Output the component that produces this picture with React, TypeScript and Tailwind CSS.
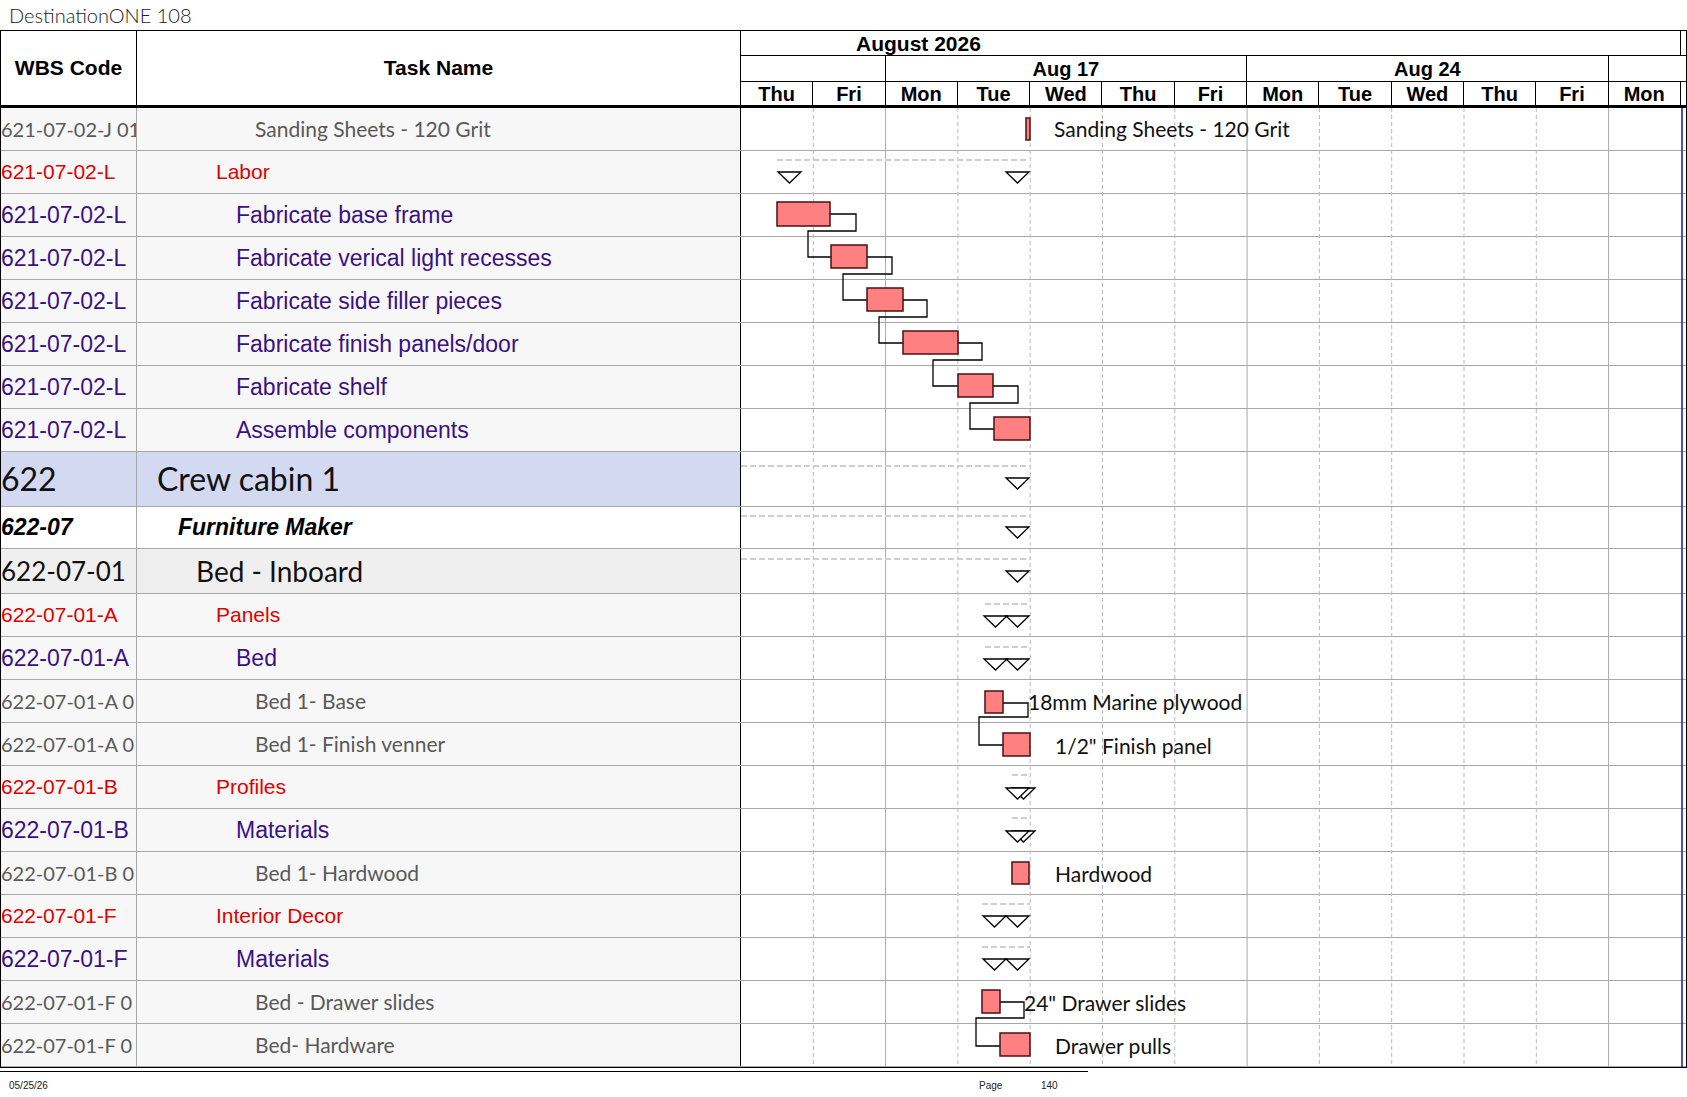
import React from "react";

type RowType = "gray" | "red" | "purple" | "crew" | "furn" | "bedin";

const rows: { t: RowType; code: string; name: string }[] = [
  { t: "gray", code: "621-07-02-J 01", name: "Sanding Sheets - 120 Grit" },
  { t: "red", code: "621-07-02-L", name: "Labor" },
  { t: "purple", code: "621-07-02-L", name: "Fabricate base frame" },
  { t: "purple", code: "621-07-02-L", name: "Fabricate verical light recesses" },
  { t: "purple", code: "621-07-02-L", name: "Fabricate side filler pieces" },
  { t: "purple", code: "621-07-02-L", name: "Fabricate finish panels/door" },
  { t: "purple", code: "621-07-02-L", name: "Fabricate shelf" },
  { t: "purple", code: "621-07-02-L", name: "Assemble components" },
  { t: "crew", code: "622", name: "Crew cabin 1" },
  { t: "furn", code: "622-07", name: "Furniture Maker" },
  { t: "bedin", code: "622-07-01", name: "Bed - Inboard" },
  { t: "red", code: "622-07-01-A", name: "Panels" },
  { t: "purple", code: "622-07-01-A", name: "Bed" },
  { t: "gray", code: "622-07-01-A 0", name: "Bed 1- Base" },
  { t: "gray", code: "622-07-01-A 0", name: "Bed 1- Finish venner" },
  { t: "red", code: "622-07-01-B", name: "Profiles" },
  { t: "purple", code: "622-07-01-B", name: "Materials" },
  { t: "gray", code: "622-07-01-B 0", name: "Bed 1- Hardwood" },
  { t: "red", code: "622-07-01-F", name: "Interior Decor" },
  { t: "purple", code: "622-07-01-F", name: "Materials" },
  { t: "gray", code: "622-07-01-F 0", name: "Bed - Drawer slides" },
  { t: "gray", code: "622-07-01-F 0", name: "Bed- Hardware" },
];

const styles: Record<RowType, { row: string; bg: string; code: string; text: string; indent: string }> = {
  gray: {
    row: "h-[43px]",
    bg: "bg-[#f7f7f7]",
    code: "font-['Lato',sans-serif] text-[20px] text-[#595959]",
    text: "font-['Lato',sans-serif] text-[21px] text-[#595959]",
    indent: "pl-[118px]",
  },
  red: {
    row: "h-[43px]",
    bg: "bg-[#f7f7f7]",
    code: "font-['Liberation_Sans',Arial,sans-serif] text-[21px] text-[#e00000]",
    text: "font-['Liberation_Sans',Arial,sans-serif] text-[21px] text-[#e00000]",
    indent: "pl-[79px]",
  },
  purple: {
    row: "h-[43px]",
    bg: "bg-[#f7f7f7]",
    code: "font-['Liberation_Sans',Arial,sans-serif] text-[23px] text-[#3a1185]",
    text: "font-['Liberation_Sans',Arial,sans-serif] text-[23px] text-[#3a1185]",
    indent: "pl-[99px]",
  },
  crew: {
    row: "h-[55px]",
    bg: "bg-[#d3d9f0]",
    code: "font-['Lato',sans-serif] text-[32px] text-[#111111]",
    text: "font-['Lato',sans-serif] text-[32px] text-[#111111]",
    indent: "pl-[20px]",
  },
  furn: {
    row: "h-[42px]",
    bg: "bg-white",
    code: "font-['Liberation_Sans',Arial,sans-serif] text-[23px] font-bold italic text-black",
    text: "font-['Liberation_Sans',Arial,sans-serif] text-[23px] font-bold italic text-black",
    indent: "pl-[41px]",
  },
  bedin: {
    row: "h-[45px]",
    bg: "bg-[#efefef]",
    code: "font-['Lato',sans-serif] text-[26px] text-[#111111]",
    text: "font-['Lato',sans-serif] text-[28px] text-[#111111]",
    indent: "pl-[59px]",
  },
};

const days = ["Thu", "Fri", "Mon", "Tue", "Wed", "Thu", "Fri", "Mon", "Tue", "Wed", "Thu", "Fri", "Mon"];

const OX = 740;
const OY = 108;
const DW = 72.3;

function X(x: number) {
  return x - OX;
}
function Y(y: number) {
  return y - OY;
}

const bars: [number, number, number, number][] = [
  [1025, 1029, 118, 140],
  [776, 829, 202, 226],
  [830, 866, 245, 268],
  [866, 902, 288, 311],
  [902, 957, 331, 354],
  [957, 992, 374, 397],
  [993, 1029, 417, 440],
  [984, 1002, 691, 713],
  [1002, 1029, 733, 756],
  [1011, 1028, 862, 884],
  [981, 999, 990, 1013],
  [999, 1029, 1033, 1056],
];

const connectors: [number, number][][] = [
  [[829, 214], [855, 214], [855, 231], [807, 231], [807, 257], [830, 257]],
  [[866, 257], [891, 257], [891, 274], [842, 274], [842, 300], [866, 300]],
  [[902, 300], [926, 300], [926, 317], [878, 317], [878, 343], [902, 343]],
  [[957, 343], [981, 343], [981, 360], [932, 360], [932, 386], [957, 386]],
  [[992, 386], [1017, 386], [1017, 403], [969, 403], [969, 429], [993, 429]],
  [[1002, 703], [1027, 703], [1027, 717], [978, 717], [978, 745], [1002, 745]],
  [[999, 1002], [1023, 1002], [1023, 1018], [975, 1018], [975, 1046], [999, 1046]],
];

const dashes: [number, number, number][] = [
  [776, 1027, 160],
  [740, 1029, 466],
  [740, 1029, 516],
  [740, 1029, 559],
  [984, 1029, 604],
  [984, 1029, 647],
  [1011, 1029, 775],
  [1011, 1029, 818],
  [981, 1029, 904],
  [981, 1029, 947],
];

const tris: [number, number][] = [
  [777, 172],
  [1005, 172],
  [1005, 478],
  [1005, 527],
  [1005, 571],
  [983, 616],
  [1005, 616],
  [983, 659],
  [1005, 659],
  [1011, 788],
  [1005, 788],
  [1011, 831],
  [1005, 831],
  [982, 916],
  [1005, 916],
  [982, 959],
  [1005, 959],
];

const labels: [number, number, string][] = [
  [1053, 128.5, "Sanding Sheets - 120 Grit"],
  [1027, 701.5, "18mm Marine plywood"],
  [1054, 745, '1/2" Finish panel'],
  [1054, 873.5, "Hardwood"],
  [1023, 1002.5, '24" Drawer slides'],
  [1054, 1045.5, "Drawer pulls"],
];

function Chart() {
  const vlines = [];
  for (let k = 1; k <= 12; k++) {
    const x = k * DW;
    const solid = k === 2 || k === 7 || k === 12;
    vlines.push(
      <line
        key={k}
        x1={x}
        x2={x}
        y1={0}
        y2={960}
        stroke={solid ? "#a8a8a8" : "#b8b8b8"}
        strokeWidth={1}
        strokeDasharray={solid ? undefined : "4 3"}
      />
    );
  }
  return (
    <svg
      className="absolute left-[740px] top-0 pointer-events-none"
      width={947}
      height={959}
      viewBox="0 0 947 959"
    >
      {vlines}
      <line x1={941} x2={941} y1={0} y2={959} stroke="#1a1aa8" strokeWidth={1.5} />
      {dashes.map(([x1, x2, y], i) => (
        <line
          key={"d" + i}
          x1={X(x1)}
          x2={X(x2)}
          y1={Y(y)}
          y2={Y(y)}
          stroke="#cfcfcf"
          strokeWidth={2}
          strokeDasharray="6 3"
        />
      ))}
      {tris.map(([x, t], i) => (
        <polygon
          key={"t" + i}
          points={`${X(x)},${Y(t)} ${X(x + 23)},${Y(t)} ${X(x + 11.5)},${Y(t + 11)}`}
          fill="white"
          stroke="#000"
          strokeWidth={1.3}
          strokeLinejoin="miter"
        />
      ))}
      {connectors.map((pts, i) => (
        <polyline
          key={"c" + i}
          points={pts.map(([x, y]) => `${X(x)},${Y(y)}`).join(" ")}
          fill="none"
          stroke="#000"
          strokeWidth={1.3}
        />
      ))}
      {bars.map(([x1, x2, y1, y2], i) => (
        <rect
          key={"b" + i}
          x={X(x1)}
          y={Y(y1)}
          width={x2 - x1}
          height={y2 - y1}
          fill="#ff8080"
          stroke="#4a1010"
          strokeWidth={1.5}
        />
      ))}
      {labels.map(([x, y, s], i) => (
        <text
          key={"l" + i}
          x={X(x)}
          y={Y(y)}
          dominantBaseline="central"
          fontFamily="Lato, sans-serif"
          fontSize={21}
          fill="#111"
        >
          {s}
        </text>
      ))}
    </svg>
  );
}

export default function App() {
  return (
    <div className="w-[1687px] h-[1097px] bg-white overflow-hidden relative">
      <div className="h-[30px] flex items-center pl-[9px] font-['Lato',sans-serif] font-light text-[20px] text-[#222]">
        DestinationONE 108
      </div>

      {/* Header */}
      <div className="flex h-[78px] border-t border-b-[3px] border-l border-r border-black">
        <div className="w-[136px] border-r border-black flex items-center justify-center font-['Liberation_Sans',Arial,sans-serif] font-bold text-[21px]">
          WBS Code
        </div>
        <div className="w-[604px] border-r border-black flex items-center justify-center font-['Liberation_Sans',Arial,sans-serif] font-bold text-[21px]">
          Task Name
        </div>
        <div className="flex-1 flex flex-col font-['Liberation_Sans',Arial,sans-serif] font-bold text-[20px] leading-none">
          <div className="h-[25px] flex border-b border-black">
            <div className="w-[940px] border-r border-black flex items-center pl-[115px] text-[21px]">August 2026</div>
            <div className="flex-1"></div>
          </div>
          <div className="h-[26px] flex border-b border-black">
            <div className="w-[144.6px] border-r border-black"></div>
            <div className="w-[361.5px] border-r border-black flex items-center justify-center">Aug 17</div>
            <div className="w-[361.5px] border-r border-black flex items-center justify-center">Aug 24</div>
            <div className="flex-1"></div>
          </div>
          <div className="flex-1 flex">
            {days.map((d, i) => (
              <div key={i} className="w-[72.3px] border-r border-black flex items-center justify-center">
                {d}
              </div>
            ))}
            <div className="flex-1"></div>
          </div>
        </div>
      </div>

      {/* Body */}
      <div className="relative border-l border-r border-b border-black">
        {rows.map((r, i) => {
          const s = styles[r.t];
          return (
            <div key={i} className={`flex border-b border-[#a8a8a8] ${s.row}`}>
              <div
                className={`w-[136px] border-r border-[#a8a8a8] flex items-center overflow-hidden whitespace-nowrap ${s.bg} ${s.code}`}
              >
                {r.code}
              </div>
              <div
                className={`w-[604px] border-r border-black flex items-center overflow-hidden whitespace-nowrap ${s.bg} ${s.text} ${s.indent}`}
              >
                {r.name}
              </div>
              <div className="flex-1 bg-white"></div>
            </div>
          );
        })}
        <Chart />
      </div>

      {/* Footer */}
      <div className="w-[1088px] border-t border-black mt-[3px]"></div>
      <div className="relative h-[20px] font-['Liberation_Sans',Arial,sans-serif] text-[10px] text-[#222]">
        <span className="absolute left-[9px] top-[6px]">05/25/26</span>
        <span className="absolute left-[979px] top-[6px]">Page</span>
        <span className="absolute left-[1041px] top-[6px]">140</span>
      </div>
    </div>
  );
}
